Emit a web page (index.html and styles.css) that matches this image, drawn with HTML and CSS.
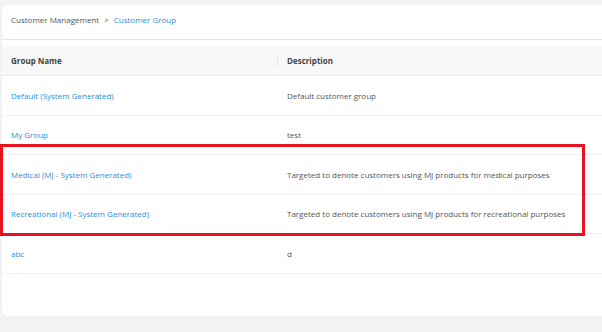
FILE: index.html
```html
<!DOCTYPE html>
<html lang="en">

<head>
    <meta charset="UTF-8">
    <meta name="viewport" content="width=device-width, initial-scale=1.0">
    <title>Customer Group</title>
    <link rel="stylesheet" href="styles.css">
</head>

<body>
    <div class="card">
        <div class="breadcrumb">
            <span>Customer Management</span>
            <span class="sep">&gt;</span>
            <a href="#">Customer Group</a>
        </div>

        <table class="groups">
            <thead>
                <tr>
                    <th class="col-name">Group Name</th>
                    <th class="col-desc"><span class="divider"></span>Description</th>
                </tr>
            </thead>
            <tbody>
                <tr>
                    <td><a href="#">Default (System Generated)</a></td>
                    <td>Default customer group</td>
                </tr>
                <tr>
                    <td><a href="#">My Group</a></td>
                    <td>test</td>
                </tr>
                <tr>
                    <td><a href="#">Medical (MJ - System Generated)</a></td>
                    <td>Targeted to denote customers using MJ products for medical purposes</td>
                </tr>
                <tr>
                    <td><a href="#">Recreational (MJ - System Generated)</a></td>
                    <td>Targeted to denote customers using MJ products for recreational purposes</td>
                </tr>
                <tr>
                    <td><a href="#">abc</a></td>
                    <td>d</td>
                </tr>
            </tbody>
        </table>
    </div>

    <!-- kotak sorotan merah -->
    <div class="highlight"></div>
</body>

</html>
```

FILE: styles.css
```css
body {
    font-family: "Open Sans", Arial, sans-serif;
    font-size: 8px;
    margin: 0;
    padding: 0;
    background-color: #f3f3f3;
    color: #555;
}

a {
    color: #2a8fd8;
    text-decoration: none;
}

.card {
    margin: 5px 0 0 2px;
    height: 311px;
    background-color: white;
    border-radius: 5px 0 0 5px;
    box-shadow: 0 1px 2px rgba(0, 0, 0, 0.06);
}

.breadcrumb {
    height: 25px;
    display: flex;
    align-items: flex-start;
    gap: 5px;
    padding: 9px 0 0 9px;
    border-bottom: 1px solid #e6e6e6;
    color: #555;
}

.groups {
    width: 100%;
    margin-top: 6px;
    border-collapse: collapse;
}

.groups th {
    height: 29px;
    padding: 0 0 0 9px;
    background-color: #f8f8f8;
    border-bottom: 1px solid #ececec;
    text-align: left;
    font-weight: 700;
    color: #444;
}

.groups th.col-name {
    width: 266px;
}

.groups th.col-desc {
    position: relative;
    padding-left: 10px;
}

.divider {
    position: absolute;
    left: 0;
    top: 8px;
    height: 13px;
    border-left: 1px solid #e6e6e6;
}

.groups td {
    height: 38.5px;
    padding: 0 0 0 9px;
    border-bottom: 1px solid #efefef;
}

.groups td + td {
    padding-left: 10px;
}

.highlight {
    position: absolute;
    left: 0;
    top: 144px;
    width: 579px;
    height: 86px;
    border: 3px solid #e8131f;
}
```
